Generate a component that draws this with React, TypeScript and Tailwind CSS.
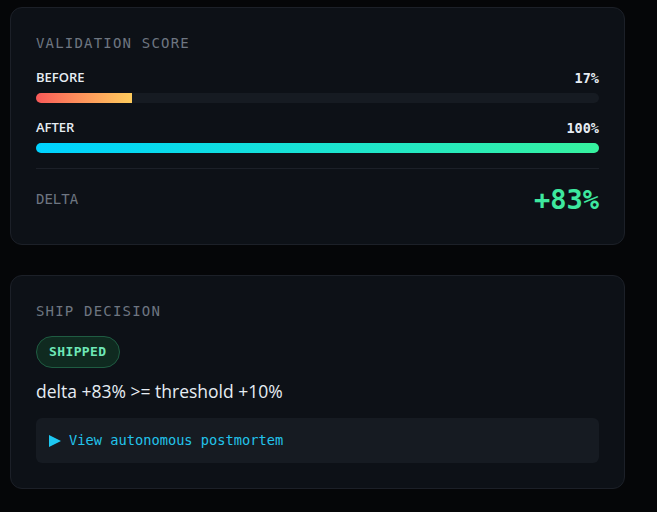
import React from "react";

const mono = "font-['DejaVu_Sans_Mono',monospace]";
const sans = "font-['Open_Sans',sans-serif]";

type BarProps = {
  label: string;
  value: number;
  fill: string;
};

const ScoreBar = ({ label, value, fill }: BarProps) => (
  <div>
    <div className="flex items-center justify-between h-5">
      <span className={`${sans} text-[13px] font-semibold text-[#e6edf3]`}>{label}</span>
      <span className={`${mono} text-[13.5px] font-bold text-[#e6edf3]`}>{value}%</span>
    </div>
    <div className="mt-[5px] h-2.5 w-full rounded-full bg-[#161b22] overflow-hidden">
      <div className={`h-full ${fill}`} style={{ width: `${value}%` }} />
    </div>
  </div>
);

const App = () => {
  return (
    <div className="min-h-screen bg-[#050608] px-[10px] pt-[7px] pb-6">
      <div className="w-[615px] flex flex-col gap-[30px]">
        <div className="rounded-xl border border-[#1c2028] bg-[#0d1117] p-[25px]">
          <h2 className={`${mono} text-[14px] leading-5 tracking-[0.085em] text-[#6e7681]`}>
            VALIDATION SCORE
          </h2>
          <div className="mt-[15px] flex flex-col gap-[15px]">
            <ScoreBar label="BEFORE" value={17} fill="bg-gradient-to-r from-[#f85858] to-[#fdcb5c]" />
            <ScoreBar label="AFTER" value={100} fill="bg-gradient-to-r from-[#00d2ff] to-[#36f29e]" />
          </div>
          <div className="mt-[15px] border-t border-[#1c2028] pt-[11px] flex items-center justify-between h-[51px]">
            <span className={`${mono} text-[14px] text-[#6e7681]`}>DELTA</span>
            <span className={`${mono} text-[27px] font-bold leading-9 text-[#3ee89f]`}>+83%</span>
          </div>
        </div>

        <div className="rounded-xl border border-[#1c2028] bg-[#0d1117] p-[25px]">
          <h2 className={`${mono} text-[14px] leading-5 tracking-[0.085em] text-[#6e7681]`}>
            SHIP DECISION
          </h2>
          <div className="mt-[15px] flex">
            <span
              className={`${mono} inline-flex h-8 items-center rounded-full border border-[#1f5c42] bg-[#0f2a20] px-3 text-[13px] font-semibold tracking-[0.03em] text-[#6ee7b7]`}
            >
              SHIPPED
            </span>
          </div>
          <p className={`${sans} mt-[9px] text-[17.5px] leading-7 text-[#e6edf3]`}>
            delta +83% &gt;= threshold +10%
          </p>
          <div className="mt-[13px] rounded-md bg-[#161b22] px-[13px] py-3">
            <div className={`${mono} flex items-center gap-2 text-[13.7px] leading-[21px] text-[#22c3eb]`}>
              <svg width="12" height="12" viewBox="0 0 12 12" className="shrink-0">
                <polygon points="0,0 12,6 0,12" fill="#1ec8f2" />
              </svg>
              <span>View autonomous postmortem</span>
            </div>
          </div>
        </div>
      </div>
    </div>
  );
};

export default App;
